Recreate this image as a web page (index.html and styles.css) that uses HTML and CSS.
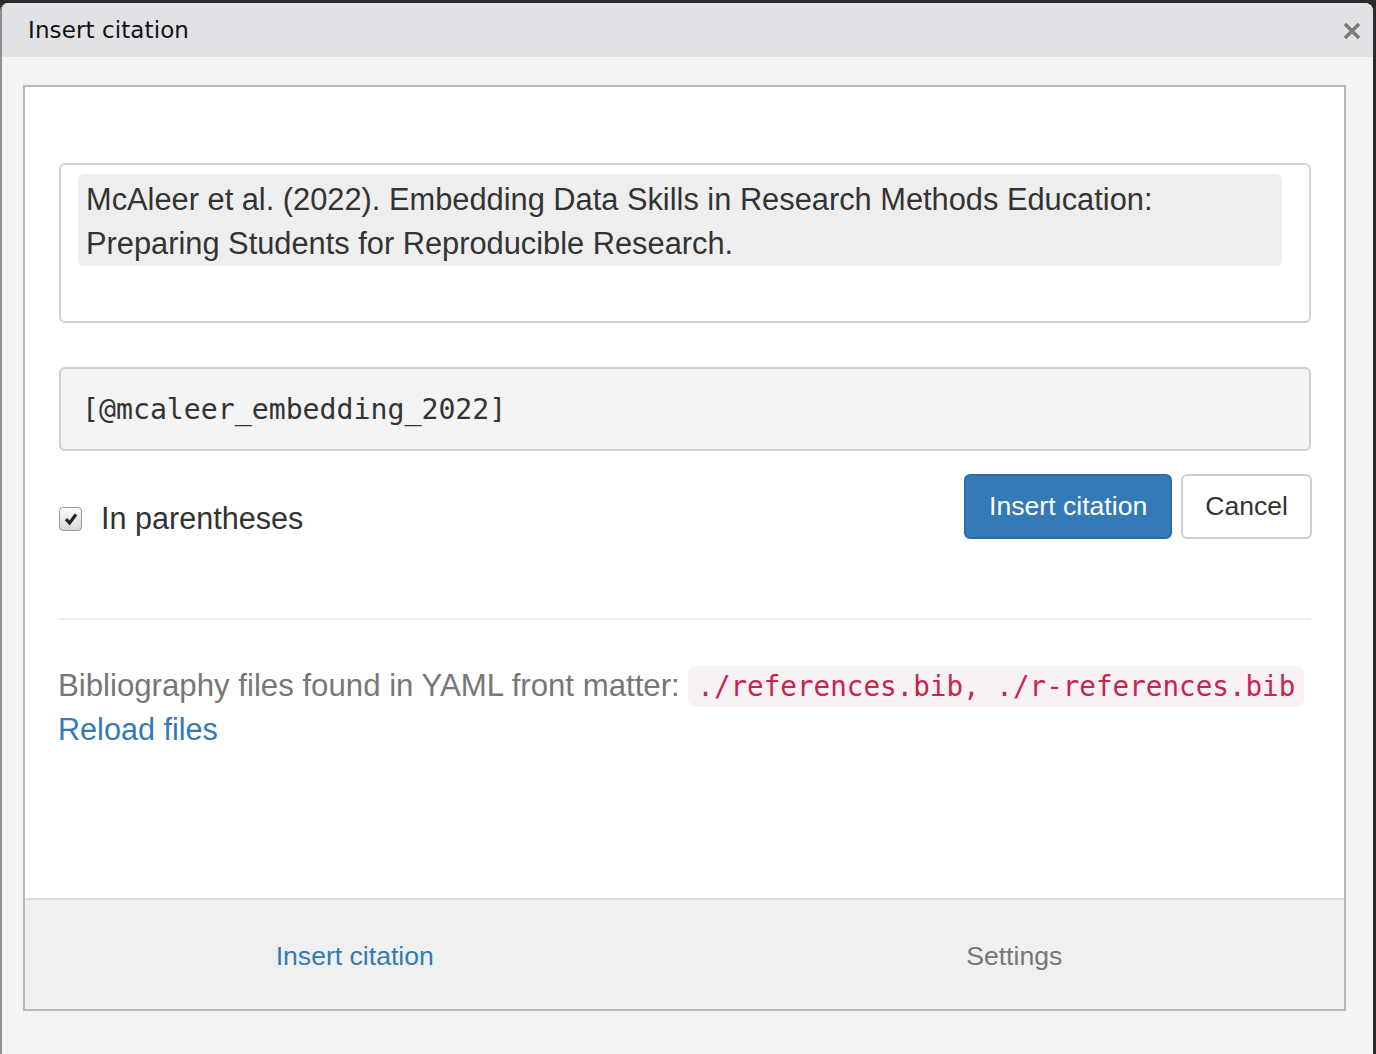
FILE: index.html
```html
<!DOCTYPE html>
<html>
<head>
<meta charset="utf-8">
<title>Insert citation</title>
<link rel="stylesheet" href="styles.css">
</head>
<body>
<div class="window">
  <div class="titlebar">
    <span class="title">Insert citation</span>
    <svg class="close" width="20" height="20" viewBox="0 0 20 20"><path d="M3 3 L17 17 M17 3 L3 17" stroke="#7b7b7b" stroke-width="3.6" stroke-linecap="butt"/></svg>
  </div>
  <div class="win-body">
    <div class="panel">
      <div class="panel-content">
        <div class="preview">
          <div class="preview-text">McAleer et al. (2022). Embedding Data Skills in Research Methods Education: Preparing Students for Reproducible Research.</div>
        </div>
        <div class="key-input">[@mcaleer_embedding_2022]</div>
        <div class="action-row">
          <label class="check">
            <span class="checkbox"><svg width="16" height="16" viewBox="0 0 16 16"><path d="M3 8.2 L6.6 12 L13 3.4" fill="none" stroke="#222" stroke-width="3.2"/></svg></span>
            <span class="check-label">In parentheses</span>
          </label>
          <div class="buttons">
            <button class="btn btn-primary">Insert citation</button>
            <button class="btn btn-default">Cancel</button>
          </div>
        </div>
        <hr class="divider">
        <p class="bib"><span class="bib-label">Bibliography files found in YAML front matter:</span> <code>./references.bib, ./r-references.bib</code><br><a class="link">Reload files</a></p>
      </div>
      <div class="tabs">
        <div class="tab active">Insert citation</div>
        <div class="tab">Settings</div>
      </div>
    </div>
  </div>
</div>
</body>
</html>
```
FILE: styles.css
```css
html, body {
  margin: 0;
  padding: 0;
  height: 100%;
}
body {
  background: #2a2a2a;
  overflow: hidden;
  font-family: "Liberation Sans", Arial, sans-serif;
}
.window {
  margin: 3px 3px 0 0;
  height: 1051px;
  background: #f2f3f3;
  border-left: 2px solid #8f8f8f;
  border-radius: 8px 8px 0 0;
  overflow: hidden;
  display: flex;
  flex-direction: column;
}
.titlebar {
  height: 54px;
  background: #e1e2e5;
  display: flex;
  align-items: center;
  justify-content: space-between;
  padding: 0 11px 0 26px;
  flex: none;
}
.title {
  font-family: "DejaVu Sans", sans-serif;
  font-size: 23px;
  color: #111;
  letter-spacing: 0.1px;
}
.close {
  display: block;
  margin-top: 1px;
}
.win-body {
  padding: 28px 27px 0 21px;
}
.panel {
  height: 926px;
  box-sizing: border-box;
  border: 2px solid #b8b8b8;
  background: #fff;
  display: flex;
  flex-direction: column;
}
.panel-content {
  flex: 1;
  padding: 76px 33px 0 34px;
}
.preview {
  height: 160px;
  box-sizing: border-box;
  border: 2px solid #d2d2d2;
  border-radius: 6px;
  padding: 9px 27px 0 17px;
}
.preview-text {
  background: #eeeeee;
  border-radius: 6px;
  padding: 4px 8px 0;
  font-size: 30.8px;
  line-height: 44px;
  color: #333;
}
.key-input {
  margin-top: 44px;
  height: 84px;
  box-sizing: border-box;
  border: 2px solid #d0d0d0;
  border-radius: 6px;
  background: #f4f4f4;
  padding-left: 21px;
  display: flex;
  align-items: center;
  font-family: "DejaVu Sans Mono", monospace;
  font-size: 28.2px;
  color: #333;
}
.action-row {
  margin-top: 23px;
  display: flex;
  justify-content: space-between;
  align-items: flex-start;
}
.check {
  margin-top: 22px;
  display: flex;
  align-items: center;
  height: 44px;
}
.checkbox {
  width: 21px;
  height: 22px;
  border: 1px solid #9a9a9a;
  border-radius: 4px;
  background: linear-gradient(#fafafa, #d8d8d8);
  display: flex;
  align-items: center;
  justify-content: center;
  margin-top: 1px;
}
.check-label {
  margin-left: 19px;
  font-size: 30.6px;
  color: #333;
}
.buttons {
  display: flex;
  gap: 9px;
  margin-right: -1px;
}
.btn {
  height: 65px;
  box-sizing: border-box;
  border-radius: 6px;
  font-family: "Liberation Sans", Arial, sans-serif;
  font-size: 26.6px;
  padding: 0 23px;
  margin: 0;
}
.btn-primary {
  background: #337ab7;
  border: 2px solid #2e6da4;
  color: #fff;
}
.btn-default {
  background: #fff;
  border: 2px solid #cfcfcf;
  color: #333;
  padding: 0 22px;
}
.divider {
  margin: 78px 0 0 -1px;
  border: 0;
  border-top: 2px solid #eeeeee;
}
.bib {
  margin: 44px 0 0 -1px;
  font-size: 30.6px;
  line-height: 42px;
  color: #777;
}
.bib-label {
  font-size: 31.2px;
}
.bib code {
  font-family: "DejaVu Sans Mono", monospace;
  font-size: 27.6px;
  color: #c7254e;
  background: #f9f2f4;
  border-radius: 8px;
  padding: 4px 9px;
}
.link {
  color: #337ab7;
}
.tabs {
  height: 111px;
  box-sizing: border-box;
  border-top: 2px solid #dddddd;
  background: #f0f0f0;
  display: flex;
}
.tab {
  flex: 1;
  display: flex;
  align-items: center;
  justify-content: center;
  font-size: 26.6px;
  color: #777;
  padding-top: 4px;
}
.tab.active {
  color: #337ab7;
}
```
